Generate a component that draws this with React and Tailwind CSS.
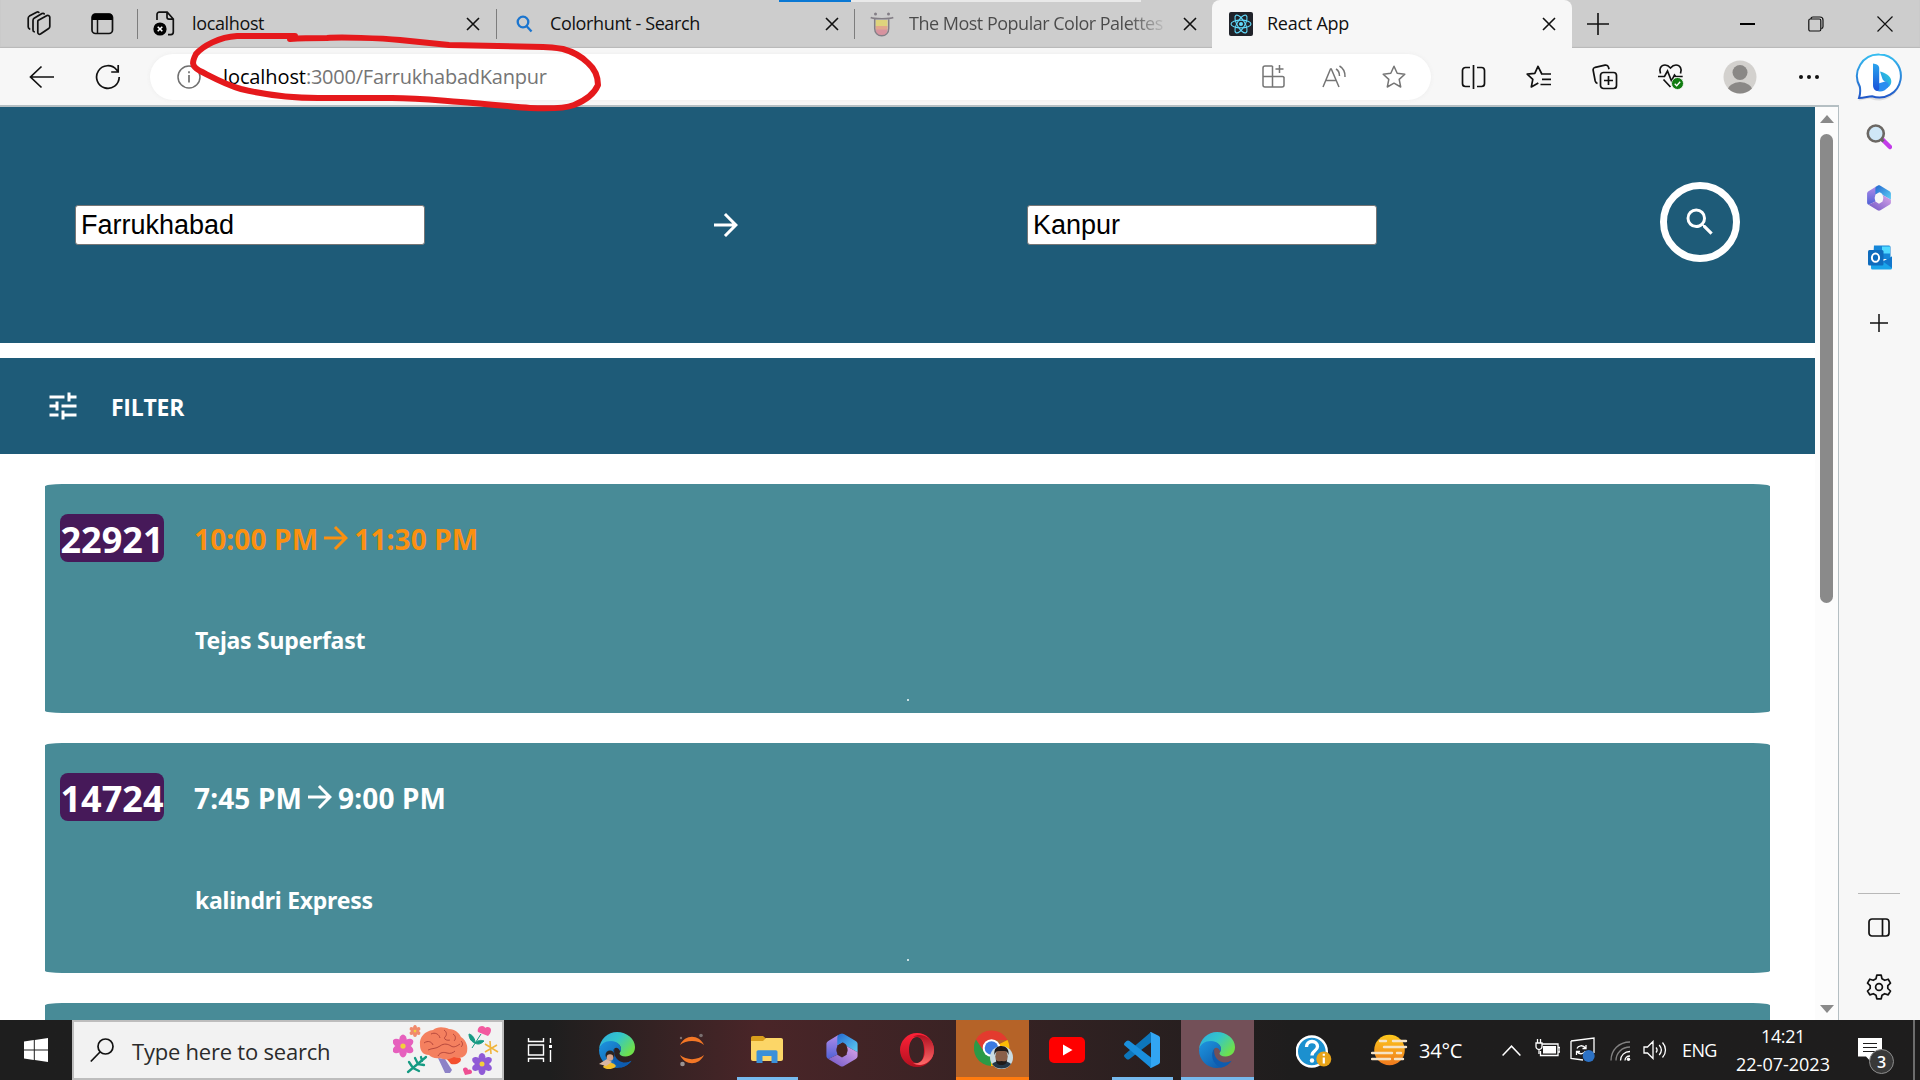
import React from "react";
import { MdTune, MdArrowForward, MdSearch } from "react-icons/md";

const UI = "font-['Open_Sans','Noto_Sans',sans-serif] whitespace-nowrap";

function CloseX({ className }) {
  return (
    <svg className={`shrink-0 ${className}`} width="14" height="14" viewBox="0 0 14 14" fill="none" stroke="#111" strokeWidth="1.6">
      <path d="M1 1l12 12M13 1L1 13" />
    </svg>
  );
}

function Divider() {
  return <div className="w-px h-[30px] bg-[#7d7d7d] shrink-0" />;
}

function WorkspacesIcon() {
  return (
    <svg width="26" height="26" viewBox="0 0 26 26" fill="none" stroke="#111" strokeWidth="1.7" strokeLinejoin="round" strokeLinecap="round">
      <path d="M12 9.5L21 4.6c1.200-.6 2.800.2 2.800 1.700v9.200c0 .9-.4 1.600-1.100 2L14.500 23c-1.200.7-2.700 0-2.700-1.400v-10c0-.9.100-1.600.2-2.100z" />
      <path d="M8.200 20.800C7.300 20.500 7 19.800 7 19V9.500c0-1 .3-1.700 1.100-2.200L16 2.600c.8-.4 1.700-.3 2.200.3" />
      <path d="M3.600 18C2.500 17.500 2.200 16.700 2.200 15.800V7.300c0-1 .4-1.700 1.200-2.200L10.600 1.200c.9-.4 1.700-.2 2.200.2" />
    </svg>
  );
}

function VerticalTabsIcon() {
  return (
    <svg width="23" height="22" viewBox="0 0 23 22" fill="none">
      <rect x="1" y="1" width="20.500" height="19.500" rx="3.500" stroke="#111" strokeWidth="1.700" />
      <path d="M1 7V4a3.500 3.500 0 013.500-3.500H18A3.500 3.500 0 0121.500 4v3z" fill="#000" />
      <path d="M6.500 7v13" stroke="#111" strokeWidth="1.500" />
    </svg>
  );
}

function BrokenPageIcon() {
  return (
    <svg width="22" height="26" viewBox="0 0 22 26" fill="none">
      <path d="M4 9V3.500C4 2 5 1.200 6.200 1.200h8L20.300 8v13c0 1.500-1 2.600-2.400 2.600H15M14 1.500V6c0 1.300.8 2.100 2 2.100h4" stroke="#111" strokeWidth="1.700" />
      <circle cx="7" cy="18" r="6.600" fill="#000" />
      <path d="M4.700 15.700l4.600 4.600M9.300 15.700l-4.600 4.600" stroke="#fff" strokeWidth="1.600" />
    </svg>
  );
}

function ReactTile() {
  return (
    <svg width="24" height="24" viewBox="0 0 24 24" fill="none" stroke="#61dafb" strokeWidth="1.100">
      <rect width="24" height="24" rx="2" fill="#20232a" stroke="none" />
      <ellipse cx="12" cy="12" rx="10" ry="3.900" />
      <ellipse cx="12" cy="12" rx="10" ry="3.900" transform="rotate(60 12 12)" />
      <ellipse cx="12" cy="12" rx="10" ry="3.900" transform="rotate(120 12 12)" />
      <circle cx="12" cy="12" r="2" fill="#61dafb" stroke="none" />
    </svg>
  );
}

function ColorHuntIcon() {
  return (
    <svg width="24" height="25" viewBox="0 0 24 25" fill="none" opacity=".85">
      <path d="M5.500 8h12v7h-12z" fill="#e3d66f" />
      <path d="M5.500 14h12v4h-12z" fill="#e6a183" />
      <path d="M5.500 17.500h12c0 4-2.500 6-6 6s-6-2-6-6z" fill="#d98a98" />
      <path d="M.7 5.500c2.800 1.500 19.800 1.500 22.600 0M4.700 7v9.500c0 4.500 3 7.300 7 7.300s7-2.800 7-7.300V7" stroke="#77717a" strokeWidth="1.500" />
      <circle cx="5.500" cy="2" r="1.500" fill="#77717a" />
      <circle cx="18.500" cy="2" r="1.500" fill="#77717a" />
    </svg>
  );
}

function TabStrip() {
  return (
    <div className="relative flex h-12 shrink-0 items-center bg-[#cdcdcd] shadow-[inset_0_-1px_1px_#b9b9b9]">
      <div className="flex w-[137px] items-center pl-[26px] gap-[39px] shrink-0">
        <WorkspacesIcon />
        <VerticalTabsIcon />
      </div>
      <Divider />
      <div className="flex w-[358px] items-center pl-[15px] pr-4 shrink-0">
        <BrokenPageIcon />
        <span className={`${UI} ml-[17px] pb-0.5 text-lg leading-6 tracking-[-0.36px] text-[#111]`}>localhost</span>
        <CloseX className="ml-auto" />
      </div>
      <Divider />
      <div className="flex w-[357px] items-center pl-[19px] pr-[15px] shrink-0">
        <svg width="17" height="18" viewBox="0 0 17 18" fill="none" stroke="#1b75cf" strokeWidth="2.300">
          <circle cx="7" cy="7" r="5.300" />
          <path d="M10.500 11l5 5.500" />
        </svg>
        <span className={`${UI} ml-[17px] pb-0.5 text-lg leading-6 tracking-[-0.37px] text-[#111]`}>Colorhunt - Search</span>
        <CloseX className="ml-auto" />
      </div>
      <Divider />
      <div className="flex w-[357px] items-center pl-[15px] pr-[15px] shrink-0">
        <ColorHuntIcon />
        <span className={`${UI} ml-[15px] w-[257px] overflow-hidden pb-0.5 text-lg leading-6 tracking-[-0.5px] bg-linear-to-r from-[#4a4a4a] from-85% to-[#c4c4c4] bg-clip-text text-transparent`}>
          The Most Popular Color Palettes
        </span>
        <CloseX className="ml-auto" />
      </div>
      <div className="flex h-12 w-[360px] items-center rounded-t-lg bg-[#f7f7f7] pl-[17px] pr-4 shrink-0">
        <ReactTile />
        <span className={`${UI} ml-[14px] pb-0.5 text-lg leading-6 tracking-[-0.25px] text-[#111]`}>React App</span>
        <CloseX className="ml-auto" />
      </div>
      <svg className="ml-[15px] shrink-0" width="22" height="22" viewBox="0 0 22 22" stroke="#111" strokeWidth="1.600">
        <path d="M11 0v22M0 11h22" />
      </svg>
      <div className="ml-auto flex items-center pr-[27px] gap-[53px]">
        <div className="h-[1.500px] w-[15px] bg-black" />
        <svg width="16" height="16" viewBox="0 0 16 16" fill="none" stroke="#111" strokeWidth="1.200">
          <rect x=".8" y="3" width="12" height="12" rx="1.500" />
          <path d="M3 3c0-1.500.8-2 2-2h7c2 0 3 1 3 3v6.500c0 1.300-.5 2-1.700 2" />
        </svg>
        <svg width="16" height="16" viewBox="0 0 16 16" fill="none" stroke="#111" strokeWidth="1.200">
          <path d="M.5.5l15 15M15.500.5l-15 15" />
        </svg>
      </div>
      <div className="absolute left-[779px] top-0 flex h-0.5 w-[362px] bg-[#e9e9e9]">
        <div className="h-full w-[72px] bg-[#0a78d4]" />
      </div>
    </div>
  );
}

const STAR = "M12 1.300l3.200 7 7.600.9-5.600 5.200 1.500 7.600L12 18.200l-6.700 3.800 1.500-7.600L1.200 9.200l7.600-.9z";

function BingIcon() {
  return (
    <svg width="48" height="50" viewBox="0 0 48 50" fill="none">
      <defs>
        <linearGradient id="bingRing" x1="0" y1="0" x2="0" y2="1">
          <stop offset="0" stopColor="#36bdf0" />
          <stop offset="1" stopColor="#2257c8" />
        </linearGradient>
        <linearGradient id="bingStem" x1="0" y1="0" x2="0" y2="1">
          <stop offset="0" stopColor="#2aa5ee" />
          <stop offset="1" stopColor="#1b50d8" />
        </linearGradient>
        <linearGradient id="bingBowl" x1="1" y1="0" x2="0" y2="1">
          <stop offset="0" stopColor="#2fd3d8" />
          <stop offset="1" stopColor="#2385ee" />
        </linearGradient>
      </defs>
      <path d="M24 2.500a21.500 21.500 0 11-8 41.500c-3-.8-8 1.500-12.500 1.500 2-4 2-7 1.500-10A21.500 21.500 0 0124 2.500z" fill="#000" opacity=".1" transform="translate(0 2)" />
      <path d="M24.500 1.500a21.500 21.500 0 11-7.500 41.700c-4 .2-8 1.800-13 1.800 1.500-4.500 1.500-8 .8-11.500A21.500 21.500 0 0124.500 1.500z" fill="#fff" stroke="url(#bingRing)" strokeWidth="2" />
      <path d="M25 18.500c5 1.500 11 4 11.300 9.500.2 3-1.300 5-3.300 6.200.5-3.200-.8-4.700-3.500-6-1.500-.7-2-2-2.700-4.200z" fill="url(#bingBowl)" />
      <path d="M18.500 32l11.500-3.500c3 .5 4.500 3 3 5.700C30 38 25 40 21.500 37.500z" fill="#2a8df0" />
      <path d="M18 10.500c3 .4 6 1.500 6.200 4.500v21c-.7 2-2 2.500-3.700 1.500C18.800 36.500 18 34.500 18 32z" fill="url(#bingStem)" />
    </svg>
  );
}

function Toolbar() {
  return (
    <div className="flex h-[57px] shrink-0 items-center bg-[#f7f7f7]">
      <svg className="ml-[29px] shrink-0" width="26" height="24" viewBox="0 0 26 24" fill="none" stroke="#111" strokeWidth="1.700">
        <path d="M25 12H1.500M12.500 1.500L1.500 12l11 10.500" />
      </svg>
      <svg className="ml-10 shrink-0" width="26" height="26" viewBox="0 0 26 26" fill="none" stroke="#111" strokeWidth="1.700">
        <path d="M24.200 13A11.300 11.300 0 1121.500 5.700L23 7.500M23.200 1v7h-7" />
      </svg>
      <div className="ml-[29px] flex h-[46px] w-[1281px] shrink-0 items-center rounded-full bg-white pl-[27px] pr-[25px] shadow-[0_0_4px_#ececec]">
        <svg className="shrink-0" width="24" height="24" viewBox="0 0 24 24" fill="none" stroke="#707070" strokeWidth="1.500">
          <circle cx="12" cy="12" r="11" />
          <path d="M12 10v7.500M12 6.300v1.900" strokeWidth="1.700" />
        </svg>
        <span className={`${UI} ml-[22px] text-xl leading-7 tracking-[-0.23px] text-[#757575]`}>
          <span className="text-black tracking-[-0.1px]">localhost</span>:3000/FarrukhabadKanpur
        </span>
        <svg className="ml-auto shrink-0" width="23" height="23" viewBox="0 0 23 23" fill="none" stroke="#757575" strokeWidth="1.500">
          <path d="M10.500 1H3a2 2 0 00-2 2v17a2 2 0 002 2h17a2 2 0 002-2v-8M1 11.500h19.500a1.500 1.500 0 011.500 1.500M10.500 1v21M17.500 0v8M13.500 4h8" />
        </svg>
        <svg className="ml-[37px] shrink-0" width="25" height="24" viewBox="0 0 25 24" fill="none" stroke="#757575" strokeWidth="1.500">
          <path d="M1 22L8.500 4h.8L17 22M3.700 15.500h10.500M14 4c2.500 1.500 3.500 3.500 3.500 7M17.500 1c4 2.300 5.700 6 5.500 11" />
        </svg>
        <svg className="ml-[35px] shrink-0" width="24" height="24" viewBox="0 0 24 24" fill="none" stroke="#757575" strokeWidth="1.500" strokeLinejoin="round">
          <path d={STAR} />
        </svg>
      </div>
      <svg className="ml-[30px] shrink-0" width="25" height="24" viewBox="0 0 25 24" fill="none" stroke="#111" strokeWidth="1.700">
        <path d="M12.500 0v24M9 2.500H4.500a3 3 0 00-3 3v13a3 3 0 003 3H9M16 2.500h4.500a3 3 0 013 3v13a3 3 0 01-3 3H16" />
      </svg>
      <svg className="ml-[40px] shrink-0" width="26" height="24" viewBox="0 0 26 24" fill="none" stroke="#111" strokeWidth="1.700" strokeLinejoin="round">
        <path d="M15.800 9L12 1.300 8.800 8.300 1.200 9.200l5.600 5.200L5.300 22l7-4M15 9h10M16 14.300h9M14.500 19.500H25" />
      </svg>
      <svg className="ml-[40px] shrink-0" width="26" height="26" viewBox="0 0 26 26" fill="none" stroke="#111" strokeWidth="1.700">
        <rect x="8.500" y="8.500" width="16" height="16" rx="3" />
        <path d="M16.500 12v9M12 16.500h9M5.500 19.500C4 19 3.500 18 3.200 17L1.200 6.500C.9 5 1.700 3.700 3.200 3.300L13 1.200c1.700-.3 3 .3 3.500 2l.5 2" />
      </svg>
      <svg className="ml-[40px] shrink-0" width="28" height="28" viewBox="0 0 28 28" fill="none" stroke="#111" strokeWidth="1.700">
        <path d="M2.500 10.500C.5 6 3 2 7 2c2.500 0 4 1.200 5.500 3C14 3.200 15.500 2 18 2c4 0 6.500 4 4.500 8.500M5.500 16.500l7 7.500M0 13.500h6.500L9.500 8l4 10 3-6 1.200 1.500h7" />
        <circle cx="19.500" cy="20.500" r="6" fill="#107c10" stroke="#f7f7f7" strokeWidth=".8" />
        <path d="M16.700 20.700l2 2 3.500-4" stroke="#fff" strokeWidth="1.300" />
      </svg>
      <svg className="ml-[37px] shrink-0" width="34" height="34" viewBox="0 0 34 34">
        <defs>
          <clipPath id="avatarClip"><circle cx="17" cy="17" r="16.500" /></clipPath>
        </defs>
        <circle cx="17" cy="17" r="16.500" fill="#d3d1ce" />
        <g fill="#8a8886" clipPath="url(#avatarClip)">
          <circle cx="17" cy="12.500" r="7.500" />
          <ellipse cx="17" cy="31" rx="12.500" ry="9" />
        </g>
      </svg>
      <svg className="ml-[42px] shrink-0" width="20" height="4" viewBox="0 0 20 4" fill="#111">
        <circle cx="2" cy="2" r="2" /><circle cx="10" cy="2" r="2" /><circle cx="18" cy="2" r="2" />
      </svg>
      <div className="ml-auto pr-[17px] pt-[3px]"><BingIcon /></div>
    </div>
  );
}

function M365({ size, hole }) {
  return (
    <svg width={size} height={size} viewBox="0 0 34 36">
      <defs>
        <linearGradient id="mA" x1="0" y1="0" x2="1" y2="1"><stop offset="0" stopColor="#2468d0" /><stop offset="1" stopColor="#5fd0f4" /></linearGradient>
        <linearGradient id="mB" x1="0" y1="0" x2="0" y2="1"><stop offset="0" stopColor="#b08ae8" /><stop offset="1" stopColor="#4f62d6" /></linearGradient>
        <linearGradient id="mC" x1="0" y1="1" x2="1" y2="0"><stop offset="0" stopColor="#6d55c4" /><stop offset="1" stopColor="#dba6ea" /></linearGradient>
      </defs>
      <path d="M12.500 2.500L2.500 8.500C1 9.500.5 10.500.5 12v12c0 1.500.5 2.500 2 3.500L12 23V13l5-3z" fill="url(#mB)" />
      <path d="M12.500 2.500L15 1c1.500-.8 2.500-.8 4 0l12.500 7.500c1.500 1 2 2 2 3.500v8.500L22 14c0-2-3-4-5-4l-5 3V5z" fill="url(#mA)" />
      <path d="M2.500 27.500L15 35c1.500.8 2.500.8 4 0l12.500-7.500c1.500-1 2-2 2-3.500v-3.500L22 14v9l-5 3-5-3z" fill="url(#mC)" />
      <circle cx="17" cy="18" r="6" fill={hole} />
    </svg>
  );
}

function Sidebar() {
  return (
    <div className="flex w-[81px] shrink-0 flex-col items-center bg-[#f7f7f7] pr-0.5">
      <svg className="mt-[19px] shrink-0" width="26" height="26" viewBox="0 0 26 26" fill="none">
        <path d="M17 16l7 7" stroke="#c23be8" strokeWidth="4.500" strokeLinecap="round" />
        <path d="M14.500 14.500l3 3" stroke="#666" strokeWidth="3" />
        <circle cx="9.800" cy="9.500" r="8" fill="#cfe7f7" stroke="#6b6763" strokeWidth="2.600" />
      </svg>
      <div className="mt-[35px]"><M365 size={26} hole="#f7f7f7" /></div>
      <svg className="mt-[34px] shrink-0 translate-x-px" width="24" height="25" viewBox="0 0 24 25">
        <path d="M6 .5h15a1.500 1.500 0 011.500 1.500v12H5z" fill="#1586d8" />
        <path d="M14 1.500h8v7h-8z" fill="#50d9ff" />
        <path d="M3 11.500l12 5 9-5V23a1.500 1.500 0 01-1.500 1.500h-18A1.500 1.500 0 013 23z" fill="#1aa4ea" />
        <path d="M15 16.500l9-5V23z" fill="#1277cc" />
        <rect x="0" y="5" width="15.500" height="15.500" rx="1.500" fill="#0f6cbd" />
        <ellipse cx="7.500" cy="12.700" rx="3.600" ry="4.100" fill="none" stroke="#fff" strokeWidth="2" />
      </svg>
      <svg className="mt-[44px] shrink-0" width="18" height="18" viewBox="0 0 18 18" stroke="#111" strokeWidth="1.500">
        <path d="M9 0v18M0 9h18" />
      </svg>
      <div className="mt-auto h-px w-[42px] shrink-0 bg-[#b8b8b8]" />
      <svg className="mt-[24px] shrink-0" width="22" height="19" viewBox="0 0 22 19" fill="none" stroke="#111" strokeWidth="1.700">
        <rect x="1" y="1" width="20" height="17" rx="3" />
        <path d="M14.500 1v17" />
      </svg>
      <svg className="mt-[37px] mb-[20px] shrink-0" width="26" height="26" viewBox="0 0 26 26" fill="none" stroke="#111" strokeWidth="1.700" strokeLinejoin="round">
        <circle cx="13" cy="13" r="3.400" />
        <path d="M10.800 1.200h4.400l.8 3.600 2.700 1.500 3.500-1.100 2.300 3.900-2.700 2.500v2.900l2.700 2.500-2.300 3.900-3.500-1.200-2.700 1.500-.8 3.600h-4.400l-.8-3.600-2.700-1.500-3.500 1.200-2.300-3.900 2.700-2.500v-2.900L1.500 9.100l2.300-3.900 3.500 1.100L10 4.800z" />
      </svg>
    </div>
  );
}

function Scrollbar() {
  return (
    <div className="flex w-[23px] shrink-0 flex-col items-center bg-[#fcfcfc]">
      <svg className="mt-2 shrink-0" width="14" height="8" viewBox="0 0 14 8"><path d="M7 0l7 8H0z" fill="#8a8a8a" /></svg>
      <div className="mt-[11px] h-[469px] w-[13px] rounded-full bg-[#8a8a8a]" />
      <svg className="mt-auto mb-[7px] shrink-0" width="14" height="8" viewBox="0 0 14 8"><path d="M7 8L0 0h14z" fill="#8a8a8a" /></svg>
    </div>
  );
}

function SearchHeader() {
  const field = "h-10 w-[350px] shrink-0 rounded-[3px] border border-[#767676] bg-white px-[5px] font-['Liberation_Sans',Arial,sans-serif] text-[27px] leading-9 text-black outline-none";
  return (
    <div className="flex h-[236px] shrink-0 items-center bg-[#1e5b78] pl-[75px]">
      <input className={field} defaultValue="Farrukhabad" />
      <MdArrowForward className="ml-[283px] size-9 shrink-0 text-white" />
      <input className={`${field} ml-[283px]`} defaultValue="Kanpur" />
      <button className="ml-[283px] mb-[7px] flex size-20 shrink-0 items-center justify-center rounded-full border-[7px] border-white text-white">
        <MdSearch className="size-9" />
      </button>
    </div>
  );
}

function TrainCard({ number, from, to, name, late }) {
  return (
    <div className="relative flex h-[229.4px] shrink-0 items-start rounded-[1%] bg-[#488b97] pl-[15px] pt-[30px]">
      <div className="flex h-12 w-[104px] items-center justify-center rounded-lg bg-[#461959] font-['Noto_Sans',sans-serif] text-4xl font-bold text-white">
        <span className="pt-[3px]">{number}</span>
      </div>
      <div className="ml-[30px] font-['Noto_Sans',sans-serif] font-bold text-white">
        <div className={`flex h-[50px] items-center pb-px text-[28px] leading-[48px] tracking-[0.15px] ${late ? "text-[#fb9010]" : "text-white"}`}>
          <span>{from}</span>
          <MdArrowForward className="mb-px size-9" />
          <span>{to}</span>
        </div>
        <div className="mt-[59.400px] pl-px text-[23px] leading-[34px] tracking-[-0.25px]">{name}</div>
      </div>
      <span className="absolute bottom-3 left-[862px] size-0.5 bg-[#c9e0e4]" />
    </div>
  );
}

function Page() {
  return (
    <div className="flex w-[1815px] shrink-0 flex-col overflow-hidden bg-white">
      <SearchHeader />
      <div className="mt-[15px] flex h-24 shrink-0 items-center bg-[#1e5b78] pl-[45px] text-white">
        <MdTune className="size-9" />
        <span className="ml-[30px] pt-0.5 font-['Open_Sans',sans-serif] text-[23px] font-bold tracking-[-0.25px]">FILTER</span>
      </div>
      <div className="mt-[30px] flex flex-col gap-[30px] px-[45px]">
        <TrainCard number="22921" from="10:00 PM" to="11:30 PM" name="Tejas Superfast" late />
        <TrainCard number="14724" from="7:45 PM" to="9:00 PM" name="kalindri Express" />
        <div className="h-[229.4px] shrink-0 rounded-[1%] bg-[#488b97]" />
      </div>
    </div>
  );
}

function Flower({ x, y, r, color }) {
  return (
    <g transform={`translate(${x} ${y})`} fill={color}>
      {[0, 60, 120, 180, 240, 300].map((a) => (
        <ellipse key={a} cx="0" cy={-r * 0.55} rx={r * 0.36} ry={r * 0.55} transform={`rotate(${a})`} />
      ))}
      <circle r={r * 0.25} fill="#f2cf3c" />
    </g>
  );
}

function BrainArt() {
  return (
    <svg width="108" height="50" viewBox="0 0 108 50" fill="none">
      <Flower x={10} y={21} r={10.5} color="#e660bd" />
      <Flower x={22} y={6} r={5.5} color="#f08a6c" />
      <Flower x={89} y={39} r={10} color="#8f5ad6" />
      <path d="M45 33l7 1 7 11-2 3h-5z" fill="#8d82c7" />
      <path d="M52 32c6-2 14-2 16 2 0 4-5 6-10 5z" fill="#f4502f" />
      <path d="M27 20C26 12 32 6 40 5c4-4 12-3 16-1 6 0 10 4 12 8 6 4 7 10 6 15-2 6-8 7-13 5-5 3-10 3-14 1-5 1-9-1-11-3-6 0-9-4-9-10z" fill="#f4805f" />
      <path d="M31 18c4-3 8-1 9 2M38 9c4-2 8 0 9 4M51 5c3 2 3 5 1 7s2 4 5 3M60 9c3 2 3 5 1 7M35 25c4-2 8-1 12-4s8-2 11 0 6 0 9-2M45 31c2-4 6-4 9-3s6 0 8-2M68 16c2 2 2 4 0 6" stroke="#a63a35" strokeWidth=".8" />
      <path d="M95 11l-10-4c-1-3 1-6 4-6 2 0 3 1 3 2 2-2 6-1 6 2 0 3-2 5-3 6z" fill="#f2599f" />
      <path d="M88 9L79 23M82 18c-3-1-6-4-6-9 4 1 6 5 6 9zM82 18c3-3 6-3 9-2-3 3-6 4-9 2z" fill="#149a82" stroke="#149a82" />
      <path d="M97 16l1 13M92 27l12-7M92 19l13 8" stroke="#f0b53d" strokeWidth="1.600" />
      <path d="M71 43c2-1 4 0 4 2 2-1 4 0 4 2 0 1-1 2-2 2l-5 1-2-5c0-1 0-2 1-2z" fill="#ee4f92" />
      <path d="M15 47L33 32M20 43l-4-6M25 39l-3-6M29 36l-1-4M20 43l6 3M25 39l6 1" stroke="#149a82" strokeWidth="2.300" strokeLinecap="round" />
    </svg>
  );
}

function EdgeLogo() {
  return (
    <svg width="36" height="36" viewBox="0 0 36 36">
      <defs>
        <linearGradient id="edgeTop" x1="0" y1="0" x2="1" y2=".6"><stop offset="0" stopColor="#2ea9e0" /><stop offset=".5" stopColor="#33c6cb" /><stop offset="1" stopColor="#6fe04b" /></linearGradient>
        <linearGradient id="edgeLow" x1="0" y1="0" x2="1" y2="1"><stop offset="0" stopColor="#1e96e0" /><stop offset="1" stopColor="#0c4fa0" /></linearGradient>
      </defs>
      <path d="M0 17C1 7 9 0 18 0c10 0 18 7 18 15 0 6-4 9.500-9.500 9.500-4 0-6-1.500-6-3 0-1.200 1.500-1.800 1.500-4.500 0-4-4-7-9-7S2 13 0 17z" fill="url(#edgeTop)" />
      <path d="M0 18C1 12 6 9 12 9c6 0 10 4 10 8 0 1-.3 2-.8 2.800C20 16 17 14.500 15 17c-4 6 2 14 10 14 3 0 5.500-1 7.500-2.200C29 33.500 24 36 18 36 8 36 0 28 0 18z" fill="url(#edgeLow)" />
      <path d="M15.500 16.500C11 22 13 32 22 35.500 27 34.500 30.500 32 32.500 28.700 29.500 30.500 26 31 23 30c-6-1.800-9-8-7.500-13.500z" fill="#0d5cb0" />
    </svg>
  );
}

function ChromeLogo() {
  return (
    <svg width="42" height="40" viewBox="0 0 42 40">
      <path d="M17.500 18L33.500 10a18 18 0 01-16.500 26z" fill="#fbbc05" />
      <path d="M17.500 18L17 36A18 18 0 012 9.500z" fill="#2b9a46" />
      <path d="M17.500 10H33.500A18 18 0 002 9.500L9.500 21z" fill="#e33b2e" />
      <circle cx="17.500" cy="18" r="8.800" fill="#fff" />
      <circle cx="17.500" cy="18" r="6.800" fill="#3b7ae0" />
      <circle cx="27.500" cy="27.500" r="11.500" fill="#c9dbe2" />
      <path d="M18 34c3-4 16-4 19 0-4 6-15 6-19 0z" fill="#253746" />
      <ellipse cx="27.500" cy="26.500" rx="6.200" ry="8" fill="#8a6049" />
      <path d="M20.500 25c-1-7 3-9 7-9s8 3 7 9c-1-3-2-4-4-4h-6c-2 0-3 1-4 4zM22 30c2 2 3 1 5.500 1s4 1 5.500-1c0 3-2 5-5.500 5S22 33 22 30z" fill="#1e1a19" />
    </svg>
  );
}

function TaskButton({ className, children, bar }) {
  return (
    <div className={`relative flex h-[60px] shrink-0 items-center justify-center ${className}`}>
      {children}
      {bar && <div className={`absolute bottom-0 h-[3px] ${bar}`} />}
    </div>
  );
}

function Taskbar() {
  return (
    <div className="flex h-[60px] shrink-0 items-center bg-linear-to-r from-[#1e1e1e] from-[550px] via-[#4a2528] via-[760px] to-[#1e1d1d] to-[1290px]">
      <TaskButton className="w-[72px]">
        <svg width="24" height="24" viewBox="0 0 24 24" fill="#fff">
          <path d="M0 3.400l9.800-1.300v9.400H0zM10.800 1.900L24 0v11.500H10.800zM0 12.500h9.800v9.400L0 20.600zM10.800 12.500H24V24l-13.200-1.900z" />
        </svg>
      </TaskButton>
      <div className="flex h-[60px] w-[432px] shrink-0 items-center border-2 border-[#bdbdbd] bg-[#f2f2f2] pl-4">
        <svg className="shrink-0" width="24" height="25" viewBox="0 0 24 25" fill="none" stroke="#111" strokeWidth="1.700">
          <circle cx="15.500" cy="8.500" r="7.500" />
          <path d="M10 14L.8 23.500" />
        </svg>
        <span className={`${UI} ml-[18px] pt-0.5 text-[22px] leading-7 tracking-[-0.22px] text-[#2b2b2b]`}>Type here to search</span>
        <div className="ml-auto pr-px"><BrainArt /></div>
      </div>
      <TaskButton className="w-[72px]">
        <svg width="26" height="24" viewBox="0 0 26 24" fill="none" stroke="#fff" strokeWidth="1.400">
          <path d="M1.500 0v3.500h15V0M1.500 24v-3.500h15V24M1.500 7h15v10h-15zM23.500 0v5M23.500 12v12" />
          <path d="M22 7h3v3h-3z" fill="#fff" stroke="none" />
        </svg>
      </TaskButton>
      <TaskButton className="ml-[5px] w-[72px]">
        <EdgeLogo />
        <svg className="absolute left-[18px] top-[30px]" width="18" height="19" viewBox="0 0 18 19">
          <path d="M4 17c2-5 10-6 13-1-3 4-10 4-13 1z" fill="#f0bd2a" />
          <path d="M0 14l8-5 5 3-6 4z" fill="#d9b5a2" />
          <circle cx="11" cy="5" r="4.500" fill="#2c2422" />
          <circle cx="11" cy="7.500" r="3.300" fill="#d6a58c" />
        </svg>
      </TaskButton>
      <TaskButton className="ml-[3px] w-[72px]">
        <svg width="26" height="34" viewBox="0 0 26 34">
          <path d="M1 12C6 1 20 1 25 12 19 6.500 7 6.500 1 12zM1 22c5 11 19 11 24 0-6 5.500-18 5.500-24 0z" fill="#f37726" />
          <circle cx="22" cy="2.500" r="1.800" fill="#7a7070" />
          <circle cx="2" cy="5" r="1.200" fill="#7a7070" />
          <circle cx="3.500" cy="31" r="2.300" fill="#9a9292" />
        </svg>
      </TaskButton>
      <TaskButton className="ml-[3px] w-[72px]" bar="w-[61px] bg-[#76b9ed]">
        <svg width="32" height="28" viewBox="0 0 32 28">
          <path d="M0 2C0 .8.8 0 2 0h10l3 2.500V8H0z" fill="#d99e1c" />
          <path d="M0 5h12l3-3h15c1.200 0 2 .8 2 2v19c0 1.200-.8 2-2 2H2c-1.200 0-2-.8-2-2z" fill="#fcd667" />
          <path d="M5.500 27V16c0-1 .7-1.700 1.700-1.700h17.600c1 0 1.700.7 1.700 1.700v11h-6v-7h-9v7z" fill="#3a90d9" />
        </svg>
      </TaskButton>
      <TaskButton className="ml-[3px] w-[72px]"><M365 size={34} hole="#44221f" /></TaskButton>
      <TaskButton className="ml-[3px] w-[72px]">
        <svg width="36" height="36" viewBox="0 0 36 36">
          <defs>
            <linearGradient id="operaBody" x1="0" y1="0" x2="0" y2="1"><stop offset="0" stopColor="#ff2238" /><stop offset="1" stopColor="#b3101f" /></linearGradient>
            <linearGradient id="operaEdge" x1="0" y1="0" x2="0" y2="1"><stop offset="0" stopColor="#b01020" /><stop offset="1" stopColor="#ff6a6a" /></linearGradient>
          </defs>
          <path fillRule="evenodd" d="M18 1a17 17 0 100 34 17 17 0 000-34zm0 4c5 0 7 6 7 13s-2 13-7 13-8-6-8-13 3-13 8-13z" fill="url(#operaBody)" />
          <path d="M14 5C21 0 35 5 35 18S21 36 14 31c9 2 12-6 12-13S23 3 14 5z" fill="url(#operaEdge)" />
        </svg>
      </TaskButton>
      <TaskButton className="ml-[3px] w-[73px] bg-[#b56328]" bar="w-[73px] bg-[#ff7b0f]"><div className="pl-1"><ChromeLogo /></div></TaskButton>
      <TaskButton className="ml-[2px] w-[72px]">
        <svg width="36" height="26" viewBox="0 0 36 26">
          <rect width="36" height="26" rx="5" fill="#f00" />
          <path d="M14 7.500l9.500 5.500-9.500 5.500z" fill="#fff" />
        </svg>
      </TaskButton>
      <TaskButton className="ml-[3px] w-[72px]" bar="w-[61px] bg-[#76b9ed]">
        <svg width="36" height="36" viewBox="0 0 36 36">
          <path d="M27 0v10.500L5.500 27c-1 .7-2 .7-3 0L.7 25.200c-.9-.9-.9-2 0-2.800z" fill="#0d76bb" />
          <path d="M27 36V25.500L5.500 9c-1-.7-2-.7-3 0L.7 10.800c-.9.9-.9 2 0 2.800z" fill="#1a8fdc" />
          <path d="M26 .3c.5-.3 1-.3 1.500 0l7 3.400c1 .5 1.500 1.200 1.500 2.300v24c0 1-.5 1.800-1.500 2.300l-7 3.400c-.5.300-1 .3-1.500 0 .6-.2 1-1 1-2V2.300c0-1-.4-1.800-1-2z" fill="#32a5f2" />
        </svg>
      </TaskButton>
      <TaskButton className="ml-[3px] w-[73px] bg-[#735058]" bar="w-[73px] bg-[#76b9ed]"><div className="pr-0.5"><EdgeLogo /></div></TaskButton>
      <svg className="ml-[42px] mt-1 shrink-0" width="36" height="34" viewBox="0 0 36 34">
        <circle cx="15.800" cy="16.500" r="15" fill="#1c90cf" stroke="#fff" strokeWidth="2.400" />
        <path d="M10.500 12c0-3.500 2.300-5.500 5.500-5.500s5.500 2 5.500 5c0 4.500-5.500 4-5.500 9" fill="none" stroke="#fff" strokeWidth="3.300" />
        <circle cx="16" cy="25.500" r="2.200" fill="#fff" />
        <circle cx="27.800" cy="24" r="7.500" fill="#e8a317" />
        <path d="M27.800 22.500v6M27.800 18.800v2" stroke="#fff" strokeWidth="2.200" />
      </svg>
      <svg className="ml-[39px] shrink-0" width="38" height="32" viewBox="0 0 38 32">
        <defs>
          <linearGradient id="sun" x1="0" y1="0" x2="0" y2="1"><stop offset="0" stopColor="#fcc81c" /><stop offset="1" stopColor="#f0791e" /></linearGradient>
        </defs>
        <circle cx="18.500" cy="16" r="15.300" fill="url(#sun)" />
        <path d="M9 7h6M22 7h13M13 13h22M1 19h20M26 19h4M1 25h18M24 25h8" stroke="#f6e3c6" strokeWidth="2.400" strokeLinecap="round" />
      </svg>
      <span className={`${UI} ml-[10px] pt-0.5 text-xl tracking-[-0.2px] text-white`}>34°C</span>
      <svg className="ml-auto shrink-0" width="19" height="11" viewBox="0 0 19 11" fill="none" stroke="#fff" strokeWidth="1.500">
        <path d="M.6 10.400L9.500 1.200l8.900 9.200" />
      </svg>
      <svg className="ml-[14px] mb-1 shrink-0" width="25" height="18" viewBox="0 0 25 18" fill="none" stroke="#fff" strokeWidth="1.300">
        <path d="M7 5h16v11.500H5.500V12M23.500 8.500H25v4.500h-1.500" />
        <path d="M8 7h13v7.500H8z" fill="#fff" stroke="none" />
        <path d="M1 4h6v3.500a3 3 0 01-6 0zM2.500 0v4M5.500 0v4M4 10.500V15" fill="#1e1d1d" />
      </svg>
      <svg className="ml-[10px] shrink-0" width="25" height="26" viewBox="0 0 25 26" fill="none" stroke="#fff" strokeWidth="1.300">
        <path d="M1 4L24 1v15M1 4v17.500l12 1.500" />
        <path d="M7 11.500c1-3 6-4 8.500-.5M16 8v3.500h-3.500M15.500 14c-1 3-6 4-8.500.5M6.500 18v-3.500H10" />
        <circle cx="18.700" cy="19" r="6" fill="#2d72c4" stroke="none" />
      </svg>
      <svg className="ml-[15px] mt-0.5 shrink-0" width="21" height="20" viewBox="0 0 21 20" fill="none" stroke="#fff" strokeWidth="1.300">
        <path d="M1 19.500C1 9 9 1 20 1M6 19.500C6 12 12 6 20 6" opacity=".45" />
        <path d="M10.500 19.500C10.500 14.500 14.500 10.500 20 10.500M15 19.500C15 17 17 15 20 15" />
        <circle cx="18.500" cy="18.300" r="1.700" fill="#fff" stroke="none" />
      </svg>
      <svg className="ml-[12px] shrink-0" width="24" height="20" viewBox="0 0 24 20" fill="none" stroke="#fff" strokeWidth="1.300">
        <path d="M1 7v6h3.500l5.500 5.500v-17L4.500 7zM13 7.500c1.300 1.500 1.300 3.500 0 5M16.200 5c2.600 3 2.600 7 0 10M19.500 2.500c4 4.500 4 10.500 0 15" />
      </svg>
      <span className={`${UI} ml-[15px] w-[34px] text-lg tracking-[-0.6px] text-white`}>ENG</span>
      <div className={`${UI} ml-[18px] flex w-[98px] flex-col items-center text-lg leading-[28px] text-white`}>
        <span className="tracking-[-0.4px]">14:21</span>
        <span>22-07-2023</span>
      </div>
      <div className="relative ml-[26px] mt-3 h-9 w-[37px] shrink-0">
        <svg width="25" height="26" viewBox="0 0 25 26">
          <path d="M0 0h24v18.500H14v6.500l-6-6.500H0z" fill="#fff" />
          <path d="M5 5.500h14M5 9.500h14M5 13.500h14" stroke="#1e1d1d" strokeWidth="1.200" />
        </svg>
        <div className={`${UI} absolute left-[11px] top-[11px] flex size-[25px] items-center justify-center rounded-full border border-[#8d8d8d] bg-[#383838] text-base font-semibold text-white`}>3</div>
      </div>
      <div className="ml-[18px] mr-[5px] h-[60px] w-[2px] shrink-0 bg-[#6d6d6d]" />
    </div>
  );
}

export default function App() {
  return (
    <div className="relative flex h-[1080px] w-[1920px] flex-col overflow-hidden bg-white">
      <TabStrip />
      <Toolbar />
      <div className="flex min-h-0 flex-1">
        <div className="flex w-[1839px] shrink-0 border-r border-t-2 border-[#b5bfc3]">
          <Page />
          <Scrollbar />
        </div>
        <Sidebar />
      </div>
      <Taskbar />
      <svg className="pointer-events-none absolute left-[180px] top-[26px]" width="430" height="90" viewBox="180 26 430 90" fill="none" stroke="#e5191c" strokeWidth="6" strokeLinejoin="round" strokeLinecap="round">
        <path d="M295 36h-58C219 37 203 46 196 54c-4 8-5 12 4 17 12 6 26 14 41 18 25 6 50 9 77 9h74c30 0 50 3 81 5 25 2 42 4 57 5 22 1 36 0 44-3 15-6 21-13 24-20 0-7-2-15-10-22-6-6-14-11-25-14-6-1-13-2-20-2l-94-2c-20-2-40-4-49-5-20-2-60-3-73-2-12 0-24 0-37 1" />
      </svg>
    </div>
  );
}
